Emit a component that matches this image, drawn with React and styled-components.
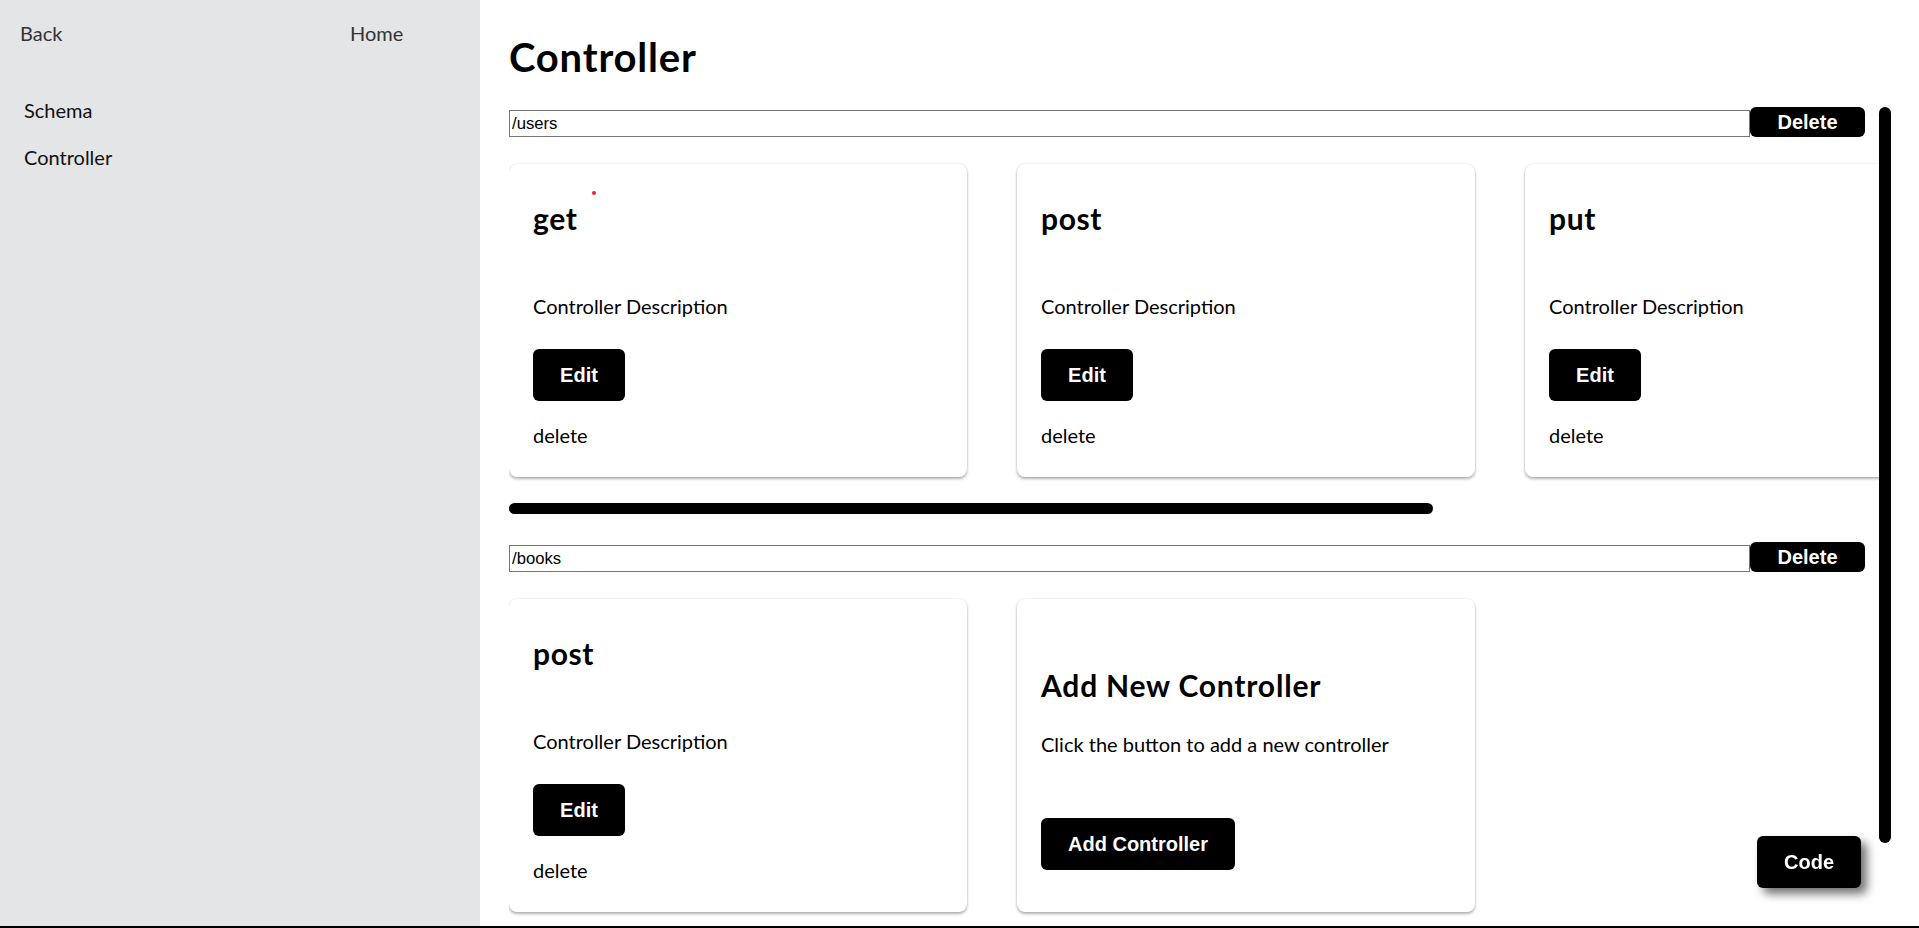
import styled, { createGlobalStyle } from "styled-components"

const GlobalStyle = createGlobalStyle`
  html, body {
    margin: 0;
    padding: 0;
  }
  body {
    font-family: Lato, "Segoe UI", sans-serif;
    color: #000;
    overflow: hidden;
  }
  * {
    box-sizing: border-box;
  }
`

const CARD_STEP = 508 // card 458 + gap 50
const ROW_WIDTH = 1370

const routes = [
  { path: "/users", methods: ["get", "post", "put"] },
  { path: "/books", methods: ["post"] },
]

export default function App() {
  return (
    <>
      <GlobalStyle />
      <Layout>
        <Sidebar>
          <TopNav>
            <NavLink>Back</NavLink>
            <NavLink>Home</NavLink>
          </TopNav>
          <Menu>
            <MenuItem>Schema</MenuItem>
            <MenuItem>Controller</MenuItem>
          </Menu>
        </Sidebar>

        <Main>
          <Title>Controller</Title>
          <Scroller>
            <ScrollContent>
              {routes.map((route) => {
                const contentWidth = (route.methods.length + 1) * CARD_STEP
                const overflow = contentWidth > ROW_WIDTH
                return (
                  <Route key={route.path}>
                    <RouteHeader>
                      <PathInput defaultValue={route.path} />
                      <DarkButton $h={30} $w={115}>Delete</DarkButton>
                    </RouteHeader>
                    <CardRow>
                      {route.methods.map((m, i) => (
                        <Card key={m}>
                          {route.path === "/users" && i === 0 && <Dot />}
                          <MethodName>{m}</MethodName>
                          <Description>Controller Description</Description>
                          <DarkButton $h={52} $w={92}>Edit</DarkButton>
                          <DeleteText>delete</DeleteText>
                        </Card>
                      ))}
                      <Card>
                        <AddTitle>Add New Controller</AddTitle>
                        <AddHint>Click the button to add a new controller</AddHint>
                        <DarkButton $h={52}>Add Controller</DarkButton>
                      </Card>
                    </CardRow>
                    {overflow && (
                      <HTrack>
                        <HThumb style={{ width: `${(ROW_WIDTH / contentWidth) * 100}%` }} />
                      </HTrack>
                    )}
                  </Route>
                )
              })}
            </ScrollContent>
            <VTrack>
              <VThumb />
            </VTrack>
          </Scroller>
        </Main>
      </Layout>
      <CodeButton>Code</CodeButton>
    </>
  )
}

const Layout = styled.div`
  display: flex;
  height: 100vh;
  border-bottom: 2px solid #000;
`

const Sidebar = styled.aside`
  width: 480px;
  flex-shrink: 0;
  background: #e4e5e7;
  padding: 21px 20px 0;
`

const TopNav = styled.nav`
  display: grid;
  grid-template-columns: 330px auto;
  font-size: 20px;
  line-height: 24px;
  color: #333;
`

const NavLink = styled.a`
  color: inherit;
  text-decoration: none;
  cursor: pointer;
`

const Menu = styled.ul`
  list-style: none;
  margin: 53px 0 0;
  padding: 0 0 0 4px;
  display: flex;
  flex-direction: column;
  gap: 23px;
`

const MenuItem = styled.li`
  font-size: 20px;
  line-height: 24px;
  color: #111;
  cursor: pointer;
`

const Main = styled.main`
  flex: 1;
  min-width: 0;
  display: flex;
  flex-direction: column;
  padding: 0 28px 0 29px;
`

const Title = styled.h1`
  font-size: 40px;
  line-height: 48px;
  font-weight: 700;
  letter-spacing: 0.8px;
  margin: 33px 0 26px;
`

const Scroller = styled.div`
  flex: 1;
  min-height: 0;
  display: flex;
`

const ScrollContent = styled.div`
  flex: 1;
  min-width: 0;
  overflow: hidden;
`

const VTrack = styled.div`
  width: 12px;
  flex-shrink: 0;
`

const VThumb = styled.div`
  height: 736px;
  border-radius: 6px;
  background: #000;
`

const Route = styled.section`
  margin-bottom: 28px;
`

const RouteHeader = styled.div`
  display: flex;
  align-items: flex-end;
  padding-right: 14px;
`

const PathInput = styled.input`
  flex: 1;
  min-width: 0;
  height: 27px;
  margin: 0;
  padding: 1px 2px;
  border: 1px solid #767676;
  border-radius: 0;
  font-family: "Liberation Sans", Arial, sans-serif;
  font-size: 16.67px;
  color: #000;
  outline: none;
`

const DarkButton = styled.button`
  height: ${(p) => p.$h}px;
  width: ${(p) => (p.$w ? `${p.$w}px` : "auto")};
  padding: 0 27px;
  border: none;
  border-radius: 6px;
  background: #000;
  color: #fff;
  font-family: "Liberation Sans", Arial, sans-serif;
  font-size: 20px;
  font-weight: 700;
  cursor: pointer;
  flex-shrink: 0;
`

const CardRow = styled.div`
  display: flex;
  overflow: hidden;
  padding: 27px 0 26px;
`

const HTrack = styled.div`
  height: 11px;
`

const HThumb = styled.div`
  height: 100%;
  border-radius: 6px;
  background: #000;
`

const Card = styled.div`
  position: relative;
  flex: 0 0 458px;
  height: 313px;
  margin-right: 50px;
  padding: 0 24px;
  background: #fff;
  border-radius: 8px;
  box-shadow: 0 2px 3px rgba(0, 0, 0, 0.3), 0 0 2px rgba(0, 0, 0, 0.12);
`

const Dot = styled.span`
  position: absolute;
  top: 27px;
  left: 83px;
  width: 4px;
  height: 4px;
  border-radius: 50%;
  background: #e8202a;
`

const MethodName = styled.h2`
  font-size: 30px;
  line-height: 40px;
  font-weight: 700;
  letter-spacing: 0.6px;
  margin: 34px 0 0;
`

const Description = styled.p`
  font-size: 20px;
  line-height: 26px;
  margin: 55px 0 30px;
`

const DeleteText = styled.p`
  font-size: 20px;
  line-height: 26px;
  margin: 21px 0 0;
  cursor: pointer;
`

const AddTitle = styled.h2`
  font-size: 30px;
  line-height: 40px;
  font-weight: 700;
  letter-spacing: 0.8px;
  margin: 66px 0 0;
`

const AddHint = styled.p`
  font-size: 20px;
  line-height: 26px;
  margin: 26px 0 61px;
`

const CodeButton = styled.button`
  position: fixed;
  right: 58px;
  bottom: 40px;
  width: 104px;
  height: 52px;
  border: none;
  border-radius: 6px;
  background: #000;
  color: #fff;
  font-family: "Liberation Sans", Arial, sans-serif;
  font-size: 20px;
  font-weight: 700;
  box-shadow: 6px 6px 10px rgba(0, 0, 0, 0.55);
  cursor: pointer;
`
